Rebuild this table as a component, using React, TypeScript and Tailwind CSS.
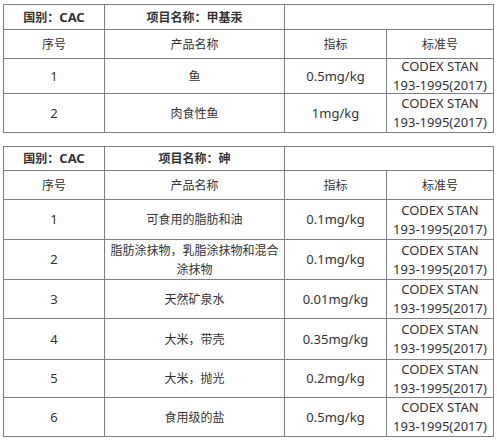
import React from "react";

type Row = { no: string; name: React.ReactNode; val: string; h: string };

const cellBase =
  "flex items-center justify-center text-center border-r border-b border-[#7f7f7f] px-[4px] leading-[19px]";

function L({ children }: { children: React.ReactNode }) {
  return <span className="text-[13px]">{children}</span>;
}

function Table({
  item,
  headH,
  colH,
  rows,
}: {
  item: string;
  headH: string;
  colH: string;
  rows: Row[];
}) {
  return (
    <div className="grid grid-cols-[101px_180px_102px_107px] border-l border-t border-[#7f7f7f] w-[491px]">
      <div className={`${cellBase} ${headH} font-bold`}>
        <span>
          国别：<L>CAC</L>
        </span>
      </div>
      <div className={`${cellBase} ${headH} font-bold`}>项目名称：{item}</div>
      <div className={`${cellBase} ${headH} col-span-2`}></div>

      <div className={`${cellBase} ${colH}`}>序号</div>
      <div className={`${cellBase} ${colH}`}>产品名称</div>
      <div className={`${cellBase} ${colH}`}>指标</div>
      <div className={`${cellBase} ${colH}`}>标准号</div>

      {rows.map((r) => (
        <React.Fragment key={r.no}>
          <div className={`${cellBase} ${r.h}`}>
            <L>{r.no}</L>
          </div>
          <div className={`${cellBase} ${r.h}`}>{r.name}</div>
          <div className={`${cellBase} ${r.h}`}>
            <L>{r.val}</L>
          </div>
          <div className={`${cellBase} ${r.h} flex-col text-[13px]`}>
            <span>CODEX STAN</span>
            <span>193-1995(2017)</span>
          </div>
        </React.Fragment>
      ))}
    </div>
  );
}

export default function App() {
  return (
    <div
      className="w-[497px] h-[442px] bg-white pl-[3px] pt-[4px] text-[12px] text-[#333333]"
      style={{ fontFamily: '"Noto Sans", "Noto Sans CJK SC", sans-serif' }}
    >
      <Table
        item="甲基汞"
        headH="h-[25px]"
        colH="h-[29px]"
        rows={[
          { no: "1", name: "鱼", val: "0.5mg/kg", h: "h-[35px]" },
          { no: "2", name: "肉食性鱼", val: "1mg/kg", h: "h-[39px]" },
        ]}
      />
      <div className="h-[13px]" />
      <Table
        item="砷"
        headH="h-[24px]"
        colH="h-[29px]"
        rows={[
          { no: "1", name: "可食用的脂肪和油", val: "0.1mg/kg", h: "h-[40px]" },
          {
            no: "2",
            name: (
              <span>
                脂肪涂抹物，乳脂涂抹物和混合
                <br />
                涂抹物
              </span>
            ),
            val: "0.1mg/kg",
            h: "h-[40px]",
          },
          { no: "3", name: "天然矿泉水", val: "0.01mg/kg", h: "h-[39px]" },
          { no: "4", name: "大米，带壳", val: "0.35mg/kg", h: "h-[41px]" },
          { no: "5", name: "大米，抛光", val: "0.2mg/kg", h: "h-[38px]" },
          { no: "6", name: "食用级的盐", val: "0.5mg/kg", h: "h-[39px]" },
        ]}
      />
    </div>
  );
}
